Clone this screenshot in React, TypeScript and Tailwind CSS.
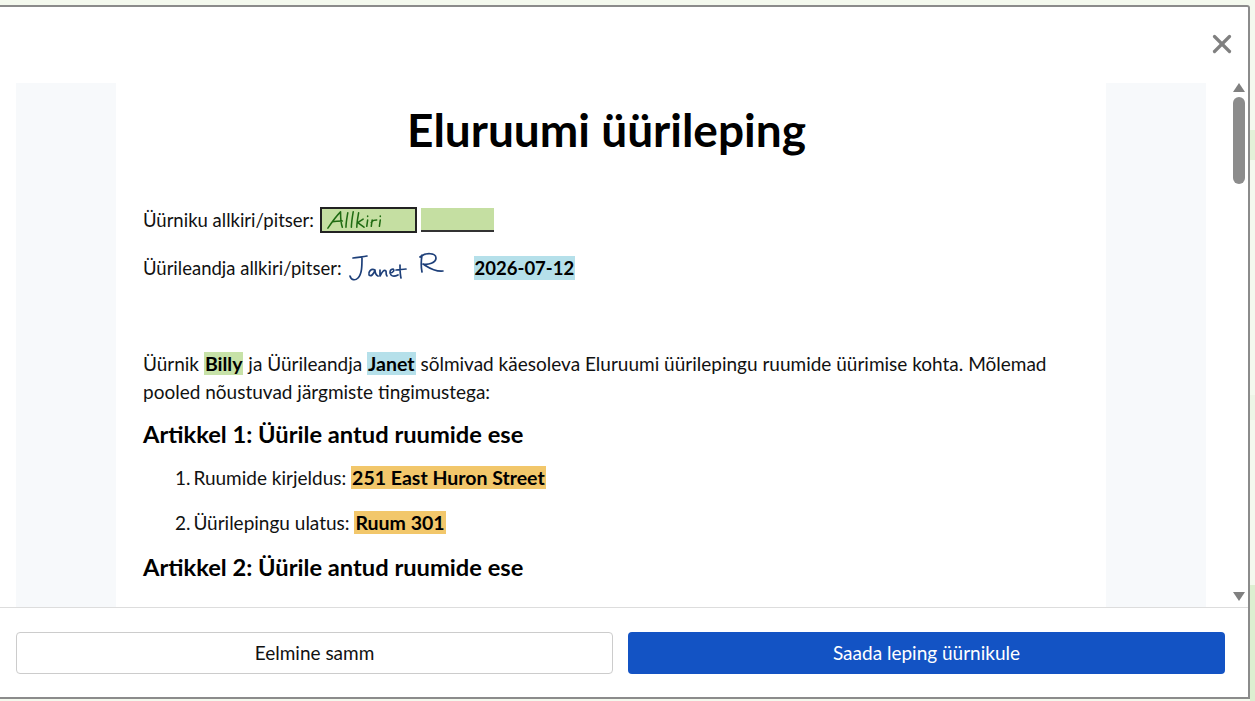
import { X } from 'lucide-react'

function Mark({ color, children }: { color: string; children: React.ReactNode }) {
  return <span className={`font-bold text-[19.5px] text-black px-px ${color}`}>{children}</span>
}

function TenantSignature() {
  return (
    <svg width="56" height="20" viewBox="0 0 62 22" fill="none" stroke="#1f6b12" strokeWidth="1.7" strokeLinecap="round" strokeLinejoin="round">
      <path d="M1 20 C5 14 10 7 15 2 C15 8 15 14 17 19 M6 13 C10 12 13 12 17 12" />
      <path d="M23 3 C22 9 21 14 21 19 M29 2 C28 8 27 14 27 19" />
      <path d="M35 3 C34 9 33 14 33 19 M40 10 L34 14 L41 19" />
      <path d="M45 11 L44 18 M45 6.5 L45 7" />
      <path d="M50 11 L49 18 M49 14 C51 11 52 11 55 11" />
      <path d="M59 11 L58 18 M59 6.5 L59 7" />
    </svg>
  )
}

function LandlordSignature() {
  return (
    <svg width="98" height="32" viewBox="0 0 98 32" fill="none" stroke="#1d3f79" strokeWidth="1.7" strokeLinecap="round" strokeLinejoin="round">
      <path d="M5 6 C10 5 15 5 19 4 M14 5 C14 14 14 22 10 26 C7 29 3 28 2 24" />
      <path d="M27 18 C23 16 20 20 21 23 C23 25 26 22 27 18 C27 21 28 23 30 24" />
      <path d="M32 18 C32 20 32 22 32 24 C34 20 36 17 38 19 C38 21 38 23 39 24" />
      <path d="M42 21 C45 21 47 18 45 17 C42 17 41 21 43 23 C45 25 48 24 50 23" />
      <path d="M52 13 C52 18 52 22 53 26 M48 18 C51 18 55 17 58 17" />
      <path d="M74 20 C73 15 73 9 74 3 M72 5 C78 0 88 1 88 6 C88 11 80 13 75 12 C80 15 86 20 95 19" />
    </svg>
  )
}

export default function App() {
  return (
    <div className="flex h-[701px] w-[1255px] overflow-hidden bg-[#f4f9ee] font-['Lato','Noto_Sans',sans-serif]">
      <div className="w-[1250px] shrink-0 pt-[5px]">
        <div className="flex h-[694px] flex-col rounded-tr-[3px] border-t-2 border-r-2 border-b-2 border-[#8b8b8b] bg-white">
          <div className="flex h-[76px] shrink-0 items-start justify-end pt-[22px] pr-[11px]">
            <X size={30} strokeWidth={2.6} className="text-[#808080]" />
          </div>

          <div className="flex min-h-0 flex-1">
            <div className="ml-[16px] w-[1190px] overflow-hidden bg-[#f7f9fb]">
              <div className="mx-[100px] h-full bg-white px-[27px] text-[19px] leading-[28px] text-[#111]">
                <h1 className="pt-[17px] pr-[9px] text-center text-[46px] leading-[60px] font-bold text-black">Eluruumi üürileping</h1>

                <div className="mt-[44px] flex h-[32px] items-center text-[18.5px]">
                  <span>Üürniku allkiri/pitser:</span>
                  <div className="ml-[6px] flex h-[26px] w-[97px] items-center border-2 border-[#222] bg-[#c5dfa2] pl-[5px]">
                    <TenantSignature />
                  </div>
                  <div className="ml-[4px] h-[24px] w-[73px] border-b-2 border-[#333] bg-[#c5dfa2]" />
                </div>

                <div className="mt-[16px] flex h-[32px] items-center text-[18.5px]">
                  <span>Üürileandja allkiri/pitser:</span>
                  <div className="ml-[6px] w-[98px]"><LandlordSignature /></div>
                  <span className="ml-[28px] bg-[#b5e0ea] px-px leading-[24px] font-bold text-black">2026-07-12</span>
                </div>

                <p className="mt-[66px] leading-[28px]">
                  Üürnik <Mark color="bg-[#c7e2a8]">Billy</Mark> ja Üürileandja <Mark color="bg-[#b5e0ea]">Janet</Mark> sõlmivad käesoleva Eluruumi üürilepingu ruumide üürimise kohta. Mõlemad pooled nõustuvad järgmiste tingimustega:
                </p>

                <h2 className="mt-[12px] text-[23.7px] leading-[32px] font-bold text-black">Artikkel 1: Üürile antud ruumide ese</h2>

                <ol className="mt-[14px] ml-[32px]">
                  <li><span className="mr-[-2px]">1.</span> Ruumide kirjeldus: <Mark color="bg-[#f2c76b]">251 East Huron Street</Mark></li>
                  <li className="mt-[17px]"><span className="mr-[-2px]">2.</span> Üürilepingu ulatus: <Mark color="bg-[#f2c76b]">Ruum 301</Mark></li>
                </ol>

                <h2 className="mt-[14px] text-[23.7px] leading-[32px] font-bold text-black">Artikkel 2: Üürile antud ruumide ese</h2>
              </div>
            </div>

            <div className="ml-[27px] flex w-[12px] flex-col items-center">
              <div className="h-0 w-0 border-x-[6px] border-b-[9px] border-x-transparent border-b-[#808080]" />
              <div className="mt-[5px] h-[87px] w-[12px] rounded-full bg-[#8c8c8c]" />
              <div className="flex-1" />
              <div className="mb-[6px] h-0 w-0 border-x-[6px] border-t-[9px] border-x-transparent border-t-[#808080]" />
            </div>
          </div>

          <div className="flex h-[90px] shrink-0 items-start gap-[15px] border-t border-[#ddd] px-[16px] pt-[24px]">
            <button className="h-[42px] w-[597px] rounded-[4px] border border-[#ccc] bg-white text-[19px] text-[#111]">Eelmine samm</button>
            <button className="h-[42px] w-[597px] rounded-[4px] bg-[#1353c4] text-[19px] text-white">Saada leping üürnikule</button>
          </div>
        </div>
      </div>

      <div className="flex w-[5px] flex-col">
        <div className="mt-[130px] h-[35px] bg-[#e3f1d8]" />
        <div className="mt-[235px] h-[30px] bg-[#edf5e6]" />
        <div className="mt-[165px] h-[136px] bg-[#dcefd0]" />
      </div>
    </div>
  )
}
